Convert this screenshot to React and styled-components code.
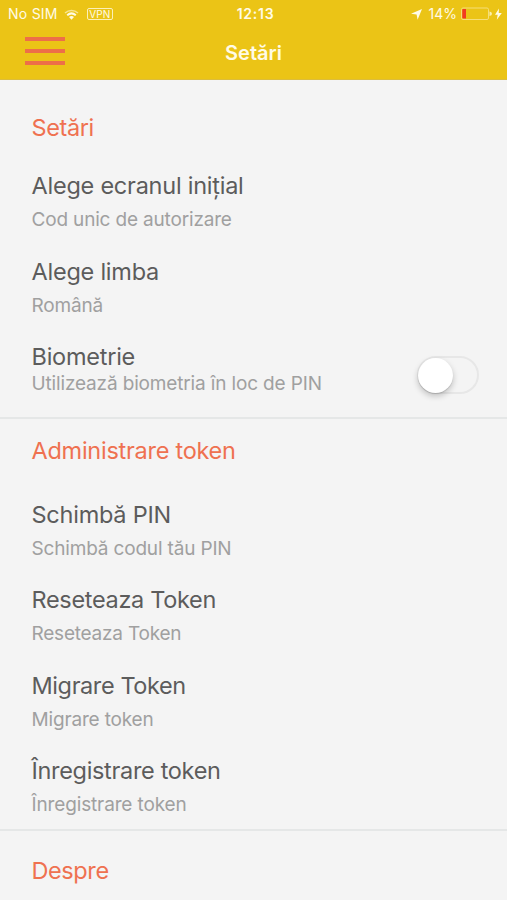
import React, { useState } from "react";
import styled, { createGlobalStyle } from "styled-components";

const GlobalStyle = createGlobalStyle`
* { box-sizing: border-box; }
body {
  margin: 0;
  background: #f4f4f4;
  font-family: Inter, "Liberation Sans", sans-serif;
}
`

const Screen = styled.div`
width: 507px;
height: 900px;
overflow: hidden;
background: #f4f4f4;
`

const Header = styled.header`
height: 79.5px;
background: #ebc416;
color: #fffbe6;
border-bottom: 1px solid #dcbd3c;
`

const StatusBar = styled.div`
display: grid;
grid-template-columns: 1fr auto 1fr;
align-items: center;
height: 28px;
padding: 0 5px 0 8px;
font-size: 14px;
line-height: 28px;
`

const StatusGroup = styled.div`
display: flex;
align-items: center;
justify-content: ${props => (props.$end ? "flex-end" : "flex-start")};
`

const StatusText = styled.span`
font-size: 14px;
letter-spacing: ${props => props.$spacing || "0"};
`

const Clock = styled.span`
font-weight: 600;
font-size: 14px;
letter-spacing: 0.75px;
padding-left: 1px;
`

const WifiIcon = styled.svg`
margin: 0 8px 0 6px;
`

const Vpn = styled.span`
width: 26px;
height: 12px;
border: 1px solid #fbf0b8;
border-radius: 2px;
font-size: 10px;
line-height: 11px;
text-align: center;
`

const Arrow = styled.svg`
margin-right: 7px;
`

const Battery = styled.svg`
margin-left: 4px;
`

const NavBar = styled.div`
display: grid;
grid-template-columns: 1fr auto 1fr;
align-items: center;
height: 46px;
padding: 0 25px;
`

const MenuButton = styled.button`
display: flex;
flex-direction: column;
justify-content: space-between;
width: 40px;
height: 28px;
padding: 0;
border: 0;
background: none;
`

const MenuLine = styled.span`
width: 40px;
height: 4px;
background: #ed6f48;
`

const Title = styled.h1`
margin: 0;
font-size: 20px;
line-height: 28px;
font-weight: 600;
letter-spacing: 0;
padding-top: 3px;
`

const Section = styled.section`
height: ${props => props.$height};
padding: ${props => props.$top} 28px 0 31.5px;
border-bottom: 2px solid #e5e7e7;
`

const Heading = styled.h2`
margin: 0 0 ${props => props.$gap || "0"};
color: #ef7150;
font-size: 23.5px;
line-height: 30px;
font-weight: 400;
letter-spacing: ${props => props.$spacing || "-0.26px"};
`

const Item = styled.div`
display: flex;
justify-content: space-between;
height: 85.5px;
`

const Name = styled.div`
color: #5c5c5c;
font-size: 23.5px;
line-height: 30px;
white-space: nowrap;
letter-spacing: ${props => props.$spacing || "-0.24px"};
`

const Info = styled.div`
margin-top: ${props => (props.$tight ? "0" : "7px")};
color: #a0a0a0;
font-size: 19px;
line-height: 24px;
white-space: nowrap;
letter-spacing: ${props => props.$spacing || "-0.17px"};
`

const Switch = styled.button`
width: 62px;
height: 38px;
margin-top: 14px;
padding: 0;
display: flex;
align-items: center;
justify-content: ${props => (props.$on ? "flex-end" : "flex-start")};
border: 2px solid #e7e7e7;
border-radius: 19px;
background: ${props => (props.$on ? "#ef7150" : "#f4f4f4")};
`

const Knob = styled.span`
width: 35px;
height: 35px;
margin: 0 -1px;
border-radius: 50%;
background: #fff;
box-shadow: 0 3px 6px rgba(0, 0, 0, 0.22), 0 1px 1px rgba(0, 0, 0, 0.12);
`

const SettingsItem = props => (
    <Item>
        <div>
            <Name $spacing={props.nameSpacing}>{props.name}</Name>
            <Info $spacing={props.infoSpacing} $tight={props.tight}>{props.info}</Info>
        </div>
        {props.children}
    </Item>
)

const App = () => {
    const [biometrics, setBiometrics] = useState(false)

    return (
        <Screen>
            <GlobalStyle />
            <Header>
                <StatusBar>
                    <StatusGroup>
                        <StatusText $spacing="0.25px">No SIM</StatusText>
                        <WifiIcon width="15" height="11" viewBox="0 0 15 11" fill="none" stroke="#fffbe6">
                            <path d="M1 4C4.8 .6 10.2 .6 14 4" strokeWidth="1.5" opacity=".6" />
                            <path d="M3.2 6.2C5.8 4 9.2 4 11.8 6.2" strokeWidth="2" />
                            <path d="M5 8C6.6 6.8 8.4 6.8 10 8L7.5 10.8Z" fill="#fffbe6" stroke="none" />
                        </WifiIcon>
                        <Vpn>VPN</Vpn>
                    </StatusGroup>
                    <Clock>12:13</Clock>
                    <StatusGroup $end>
                        <Arrow width="11" height="11" viewBox="0 0 11 11" fill="#fffbe6">
                            <path d="M11 0L6.6 10.8L5.6 5.4L0 4.7Z" />
                        </Arrow>
                        <StatusText>14%</StatusText>
                        <Battery width="41" height="14" viewBox="0 0 41 14">
                            <rect x=".5" y="1" width="27" height="11.5" rx="1.5" fill="none" stroke="#f5de79" />
                            <path d="M2 2H5V11.5H2Q1.3 11.5 1.3 10.8V2.7Q1.3 2 2 2Z" fill="#f23a22" />
                            <path d="M28.5 4.5Q31 5 31 6.8Q31 8.5 28.5 9Z" fill="#fbefb0" />
                            <path d="M38 1.5L34 7.7H36.7L35.8 12.8L40.8 6H37.7Z" fill="#fffbe6" />
                        </Battery>
                    </StatusGroup>
                </StatusBar>
                <NavBar>
                    <MenuButton aria-label="Meniu">
                        <MenuLine />
                        <MenuLine />
                        <MenuLine />
                    </MenuButton>
                    <Title>Setări</Title>
                </NavBar>
            </Header>

            <Section $height="339px" $top="33.5px">
                <Heading $gap="28px" $spacing="-0.4px">Setări</Heading>
                <SettingsItem name="Alege ecranul inițial" info="Cod unic de autorizare" />
                <SettingsItem name="Alege limba" info="Română" />
                <SettingsItem name="Biometrie" info="Utilizează biometria în loc de PIN" infoSpacing="-0.15px" tight>
                    <Switch
                        role="switch"
                        aria-checked={biometrics}
                        $on={biometrics}
                        onClick={() => setBiometrics(!biometrics)}
                    >
                        <Knob />
                    </Switch>
                </SettingsItem>
            </Section>

            <Section $height="412.5px" $top="17px">
                <Heading $gap="34px">Administrare token</Heading>
                <SettingsItem name="Schimbă PIN" info="Schimbă codul tău PIN" />
                <SettingsItem name="Reseteaza Token" info="Reseteaza Token" nameSpacing="-0.32px" infoSpacing="-0.22px" />
                <SettingsItem name="Migrare Token" info="Migrare token" nameSpacing="-0.4px" />
                <SettingsItem name="Înregistrare token" info="Înregistrare token" nameSpacing="-0.32px" infoSpacing="-0.14px" />
            </Section>

            <Section $height="90px" $top="25px">
                <Heading $spacing="-0.4px">Despre</Heading>
            </Section>
        </Screen>
    )
}

export default App;
